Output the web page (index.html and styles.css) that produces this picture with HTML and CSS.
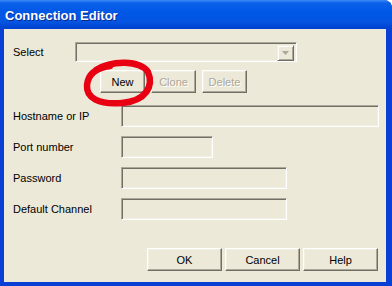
FILE: index.html
```html
<!DOCTYPE html>
<html lang="en">
<head>
  <meta charset="UTF-8">
  <title>Connection Editor</title>
  <link rel="stylesheet" href="styles.css">
</head>
<body>

  <!-- Dialog window -->
  <div class="window">
    <div class="titlebar">
      <span class="title">Connection Editor</span>
    </div>

    <div class="client">
      <div class="select-row">
        <label class="select-label">Select</label>
        <div class="combo">
          <span class="combo-btn">
            <svg width="7" height="4" viewBox="0 0 7 4"><path d="M0 0H7L3.5 4Z" fill="#aca899"/></svg>
          </span>
        </div>
      </div>

      <div class="action-row">
        <button class="btn">New</button>
        <button class="btn" disabled>Clone</button>
        <button class="btn" disabled>Delete</button>
      </div>

      <div class="fields">
        <label class="field-label">Hostname or IP</label>
        <div class="input input-wide"></div>
        <label class="field-label">Port number</label>
        <div class="input input-short"></div>
        <label class="field-label">Password</label>
        <div class="input input-mid"></div>
        <label class="field-label">Default Channel</label>
        <div class="input input-mid"></div>
      </div>

      <div class="footer">
        <button class="btn btn-wide">OK</button>
        <button class="btn btn-wide">Cancel</button>
        <button class="btn btn-wide">Help</button>
      </div>
    </div>

    <!-- red marker drawn over the New button -->
    <svg class="mark" viewBox="0 0 392 286" width="392" height="286">
      <path d="M96 70 C112 60, 140 60, 148 72 C154 86, 146 101, 122 103 C99 105, 86 98, 87 85 C88 74, 96 68, 110 66" fill="none" stroke="#e80012" stroke-width="6.5" stroke-linecap="round"/>
    </svg>
  </div>

</body>
</html>
```

FILE: styles.css
```css
body {
  margin: 0;
  background-color: #fff;
  font-family: "Liberation Sans", Arial, sans-serif;
  font-size: 11px;
}

.window {
  position: relative;
  width: 392px;
  height: 286px;
  box-sizing: border-box;
  display: flex;
  flex-direction: column;
  background-color: #0a3fd6;
  border-top-right-radius: 8px;
  overflow: hidden;
}

.titlebar {
  height: 29px;
  flex-shrink: 0;
  display: flex;
  align-items: center;
  padding-left: 5px;
  background: linear-gradient(to bottom, #3d8cf5 0, #0a60e8 3px, #0058e6 12px, #0654e2 22px, #0040cc 29px);
}

.title {
  color: #fff;
  font-weight: bold;
  font-size: 13px;
  padding-top: 1px;
  text-shadow: 1px 1px #0a2a8a;
}

.client {
  flex: 1;
  margin: 0 6px 4px 4px;
  padding: 13px 8px 0 9px;
  background-color: #ece9d8;
  display: flex;
  flex-direction: column;
  color: #000;
}

/* sunken boxes */
.combo, .input {
  box-sizing: border-box;
  border-top: 1px solid #aca899;
  border-left: 1px solid #aca899;
  border-right: 1px solid #fff;
  border-bottom: 1px solid #fff;
  box-shadow: inset 1px 1px #716f64, inset -1px -1px #f1efe2;
  background-color: #ece9d8;
}

.select-row {
  display: flex;
  align-items: center;
  height: 20px;
}

.select-label {
  width: 62px;
}

.combo {
  width: 222px;
  height: 20px;
  display: flex;
  justify-content: flex-end;
  padding: 2px;
}

.combo-btn {
  width: 17px;
  height: 16px;
  box-sizing: border-box;
  display: flex;
  align-items: center;
  justify-content: center;
  border-top: 1px solid #f1efe2;
  border-left: 1px solid #f1efe2;
  border-right: 1px solid #716f64;
  border-bottom: 1px solid #716f64;
  box-shadow: inset 1px 1px #fff, inset -1px -1px #aca899;
}

/* raised buttons */
.btn {
  box-sizing: border-box;
  width: 45px;
  height: 23px;
  padding: 0;
  font-family: "Liberation Sans", Arial, sans-serif;
  font-size: 11px;
  color: #000;
  background-color: #ece9d8;
  border-top: 1px solid #fff;
  border-left: 1px solid #fff;
  border-right: 1px solid #716f64;
  border-bottom: 1px solid #716f64;
  box-shadow: inset -1px -1px #aca899, inset 1px 1px #f1efe2;
}

.btn:disabled {
  color: #aca899;
  text-shadow: 1px 1px #fff;
}

.action-row {
  display: flex;
  gap: 6px;
  margin-top: 8px;
  padding-left: 87px;
}

.fields {
  display: grid;
  grid-template-columns: 108px 1fr;
  grid-auto-rows: 22px;
  row-gap: 9px;
  align-items: center;
  margin-top: 12px;
}

.field-label {
  align-self: center;
}

.input {
  height: 22px;
}

.input-wide { width: 258px; }
.input-short { width: 92px; }
.input-mid { width: 166px; }

.footer {
  display: flex;
  justify-content: flex-end;
  gap: 3px;
  margin-top: 28px;
}

.btn-wide {
  width: 75px;
}

.mark {
  position: absolute;
  left: 0;
  top: 0;
  pointer-events: none;
}
```
